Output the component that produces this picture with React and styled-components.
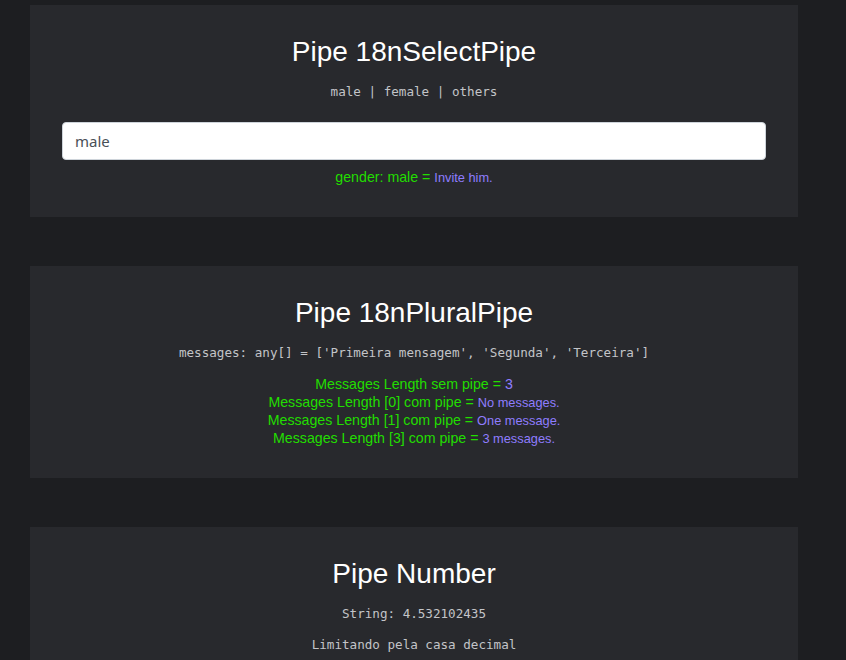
import React from "react";
import styled, { createGlobalStyle } from "styled-components";

const GlobalStyle = createGlobalStyle`
  html, body {
    margin: 0;
    padding: 0;
    background: #1d1e21;
  }
  body {
    font-family: "Liberation Sans", Arial, sans-serif;
  }
`;

const Page = styled.div`
  display: flex;
  flex-direction: column;
  gap: 49px;
  padding: 5px 0 0 30px;
  min-height: 660px;
  box-sizing: border-box;
`;

const Card = styled.section`
  width: 768px;
  box-sizing: border-box;
  background: #28292d;
  padding: 30px 32px 31px;
  text-align: center;
`;

const Title = styled.h2`
  margin: 0;
  font-family: "Liberation Sans", Arial, sans-serif;
  font-weight: 400;
  font-size: 28px;
  line-height: 34px;
  color: #ffffff;
`;

const Code = styled.p`
  margin: ${(p) => p.$top || 15}px 0 0;
  font-family: "DejaVu Sans Mono", "Liberation Mono", monospace;
  font-size: 12.6px;
  line-height: 16px;
  color: #c3c4c8;
  white-space: pre;
`;

const Input = styled.input`
  display: block;
  width: 100%;
  box-sizing: border-box;
  height: 38px;
  margin-top: 22px;
  padding: 0 12px;
  border: 1px solid #ced4da;
  border-radius: 4px;
  background: #ffffff;
  font-family: "Noto Sans", "Open Sans", sans-serif;
  font-size: 15px;
  color: #495057;
  outline: none;
`;

const Result = styled.div`
  margin-top: ${(p) => p.$top || 8}px;
  display: flex;
  flex-direction: column;
`;

const Line = styled.div`
  font-size: 14.2px;
  line-height: 18px;
  color: #22dd00;
`;

const Value = styled.span`
  font-size: ${(p) => (p.$plain ? 14.2 : 12.8)}px;
  line-height: 1;
  color: #8f7dff;
`;

const messageLines = [
  ["Messages Length sem pipe = ", "3", true],
  ["Messages Length [0] com pipe = ", "No messages."],
  ["Messages Length [1] com pipe = ", "One message."],
  ["Messages Length [3] com pipe = ", "3 messages."],
];

export default function App() {
  return (
    <>
      <GlobalStyle />
      <Page>
        <Card>
          <Title>Pipe 18nSelectPipe</Title>
          <Code>male | female | others</Code>
          <Input defaultValue="male" />
          <Result>
            <Line>
              gender: male = <Value>Invite him.</Value>
            </Line>
          </Result>
        </Card>

        <Card>
          <Title>Pipe 18nPluralPipe</Title>
          <Code>messages: any[] = ['Primeira mensagem', 'Segunda', 'Terceira']</Code>
          <Result $top={14}>
            {messageLines.map(([label, value, plain]) => (
              <Line key={label}>
                {label}
                <Value $plain={plain}>{value}</Value>
              </Line>
            ))}
          </Result>
        </Card>

        <Card>
          <Title>Pipe Number</Title>
          <Code>String: 4.532102435</Code>
          <Code>Limitando pela casa decimal</Code>
        </Card>
      </Page>
    </>
  );
}
